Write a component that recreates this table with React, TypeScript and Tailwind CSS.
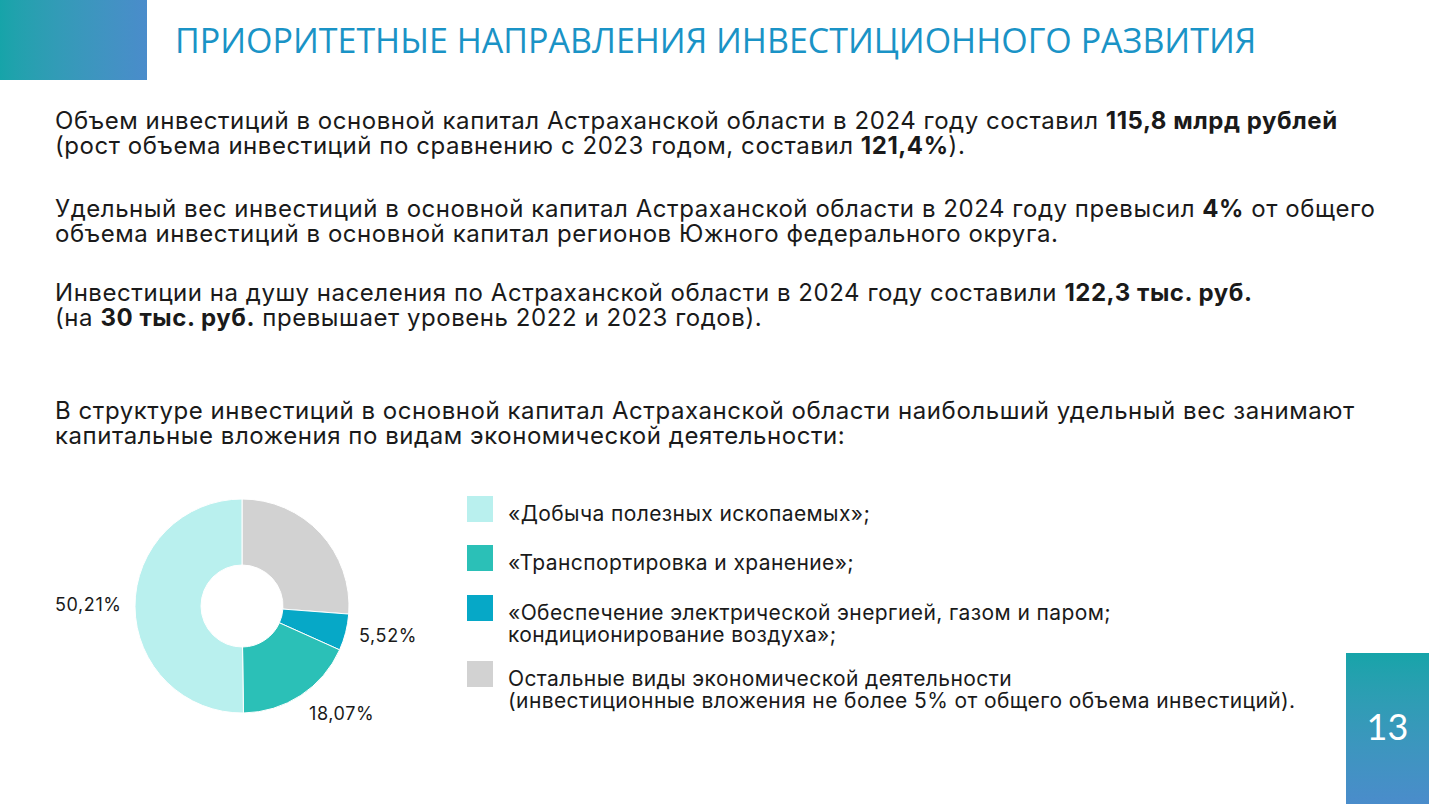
import React from 'react';

const BODY = '"Inter", "Noto Sans", sans-serif';

interface Slice {
  label: string;
  value: number;
  color: string;
}

// clockwise from 12 o'clock
const slices: Slice[] = [
  { label: 'other', value: 26.2, color: '#d2d2d2' },
  { label: 'energy', value: 5.52, color: '#06a8c7' },
  { label: 'transport', value: 18.07, color: '#2bc0b7' },
  { label: 'mining', value: 50.21, color: '#b9f0ee' },
];

const legend = [
  { color: '#b9f0ee', gap: 'mt-0', lines: ['«Добыча полезных ископаемых»;'] },
  { color: '#2bc0b7', gap: 'mt-[20px]', lines: ['«Транспортировка и хранение»;'] },
  { color: '#06a8c7', gap: 'mt-[21px]', lines: ['«Обеспечение электрической энергией, газом и паром;', 'кондиционирование воздуха»;'] },
  { color: '#d2d2d2', gap: 'mt-[15px]', lines: ['Остальные виды экономической деятельности', '(инвестиционные вложения не более 5% от общего объема инвестиций).'] },
];

function arcPath(cx: number, cy: number, r: number, ri: number, a0: number, a1: number) {
  const p = (a: number, rad: number) => {
    const t = (a - 90) * (Math.PI / 180);
    return [cx + rad * Math.cos(t), cy + rad * Math.sin(t)];
  };
  const large = a1 - a0 > 180 ? 1 : 0;
  const [x0, y0] = p(a0, r);
  const [x1, y1] = p(a1, r);
  const [x2, y2] = p(a1, ri);
  const [x3, y3] = p(a0, ri);
  return `M${x0} ${y0} A${r} ${r} 0 ${large} 1 ${x1} ${y1} L${x2} ${y2} A${ri} ${ri} 0 ${large} 0 ${x3} ${y3} Z`;
}

function Donut() {
  const total = slices.reduce((s, x) => s + x.value, 0);
  let acc = 0;
  return (
    <svg width="380" height="240" viewBox="0 0 380 240" className="block">
      {slices.map((s) => {
        const a0 = (acc / total) * 360;
        acc += s.value;
        const a1 = (acc / total) * 360;
        return <path key={s.label} d={arcPath(187, 118, 107, 41, a0, a1)} fill={s.color} stroke="#ffffff" strokeWidth="1" />;
      })}
      <g fontFamily={BODY} fontSize="18" letterSpacing="0.6" fill="#1a1a1a">
        <text x="0" y="123">50,21%</text>
        <text x="304" y="154">5,52%</text>
        <text x="254" y="232">18,07%</text>
      </g>
    </svg>
  );
}

export default function App() {
  return (
    <div className="relative w-[1429px] h-[804px] overflow-hidden bg-white text-[#1a1a1a]" style={{ fontFamily: BODY }}>
      <header className="flex items-center h-[80px]">
        <div className="w-[147px] h-[80px] bg-gradient-to-r from-[#16a4a9] to-[#4a8ccb]" />
        <h1
          className="ml-[28px] text-[34px] leading-none text-[#1a93c6] whitespace-nowrap"
          style={{ fontFamily: '"Open Sans", "Noto Sans", sans-serif' }}
        >
          ПРИОРИТЕТНЫЕ НАПРАВЛЕНИЯ ИНВЕСТИЦИОННОГО РАЗВИТИЯ
        </h1>
      </header>

      <main className="pl-[55px] pt-[28px] text-[24px] leading-[25px] tracking-[0.55px]">
        <p>
          Объем инвестиций в основной капитал Астраханской области в 2024 году составил <b>115,8 млрд рублей</b>
          <br />
          (рост объема инвестиций по сравнению с 2023 годом, составил <b>121,4%</b>).
        </p>
        <p className="mt-[38px]">
          Удельный вес инвестиций в основной капитал Астраханской области в 2024 году превысил <b>4%</b> от общего
          <br />
          объема инвестиций в основной капитал регионов Южного федерального округа.
        </p>
        <p className="mt-[34px]">
          Инвестиции на душу населения по Астраханской области в 2024 году составили <b>122,3 тыс. руб.</b>
          <br />
          (на <b>30 тыс. руб.</b> превышает уровень 2022 и 2023 годов).
        </p>
        <p className="mt-[68px]">
          В структуре инвестиций в основной капитал Астраханской области наибольший удельный вес занимают
          <br />
          капитальные вложения по видам экономической деятельности:
        </p>

        <section className="flex mt-[48px]">
          <div className="-mt-[8px]">
            <Donut />
          </div>
          <ul className="ml-[32px] flex flex-col text-[21px] leading-[22px] tracking-[0.4px]">
            {legend.map((item) => (
              <li key={item.color} className={`flex items-start ${item.gap}`}>
                <span className="w-[26px] h-[26px] shrink-0" style={{ backgroundColor: item.color }} />
                <span className="ml-[15px] mt-[7px]">
                  {item.lines.map((l, i) => (
                    <span key={i} className="block whitespace-nowrap">{l}</span>
                  ))}
                </span>
              </li>
            ))}
          </ul>
        </section>
      </main>

      <div className="absolute right-0 bottom-0 w-[83px] h-[151px] bg-gradient-to-b from-[#16a4a9] to-[#4a8ccb] flex items-center justify-center">
        <span className="text-white text-[36px] leading-none -mt-[6px]" style={{ fontFamily: '"Lato", sans-serif' }}>13</span>
      </div>
    </div>
  );
}
